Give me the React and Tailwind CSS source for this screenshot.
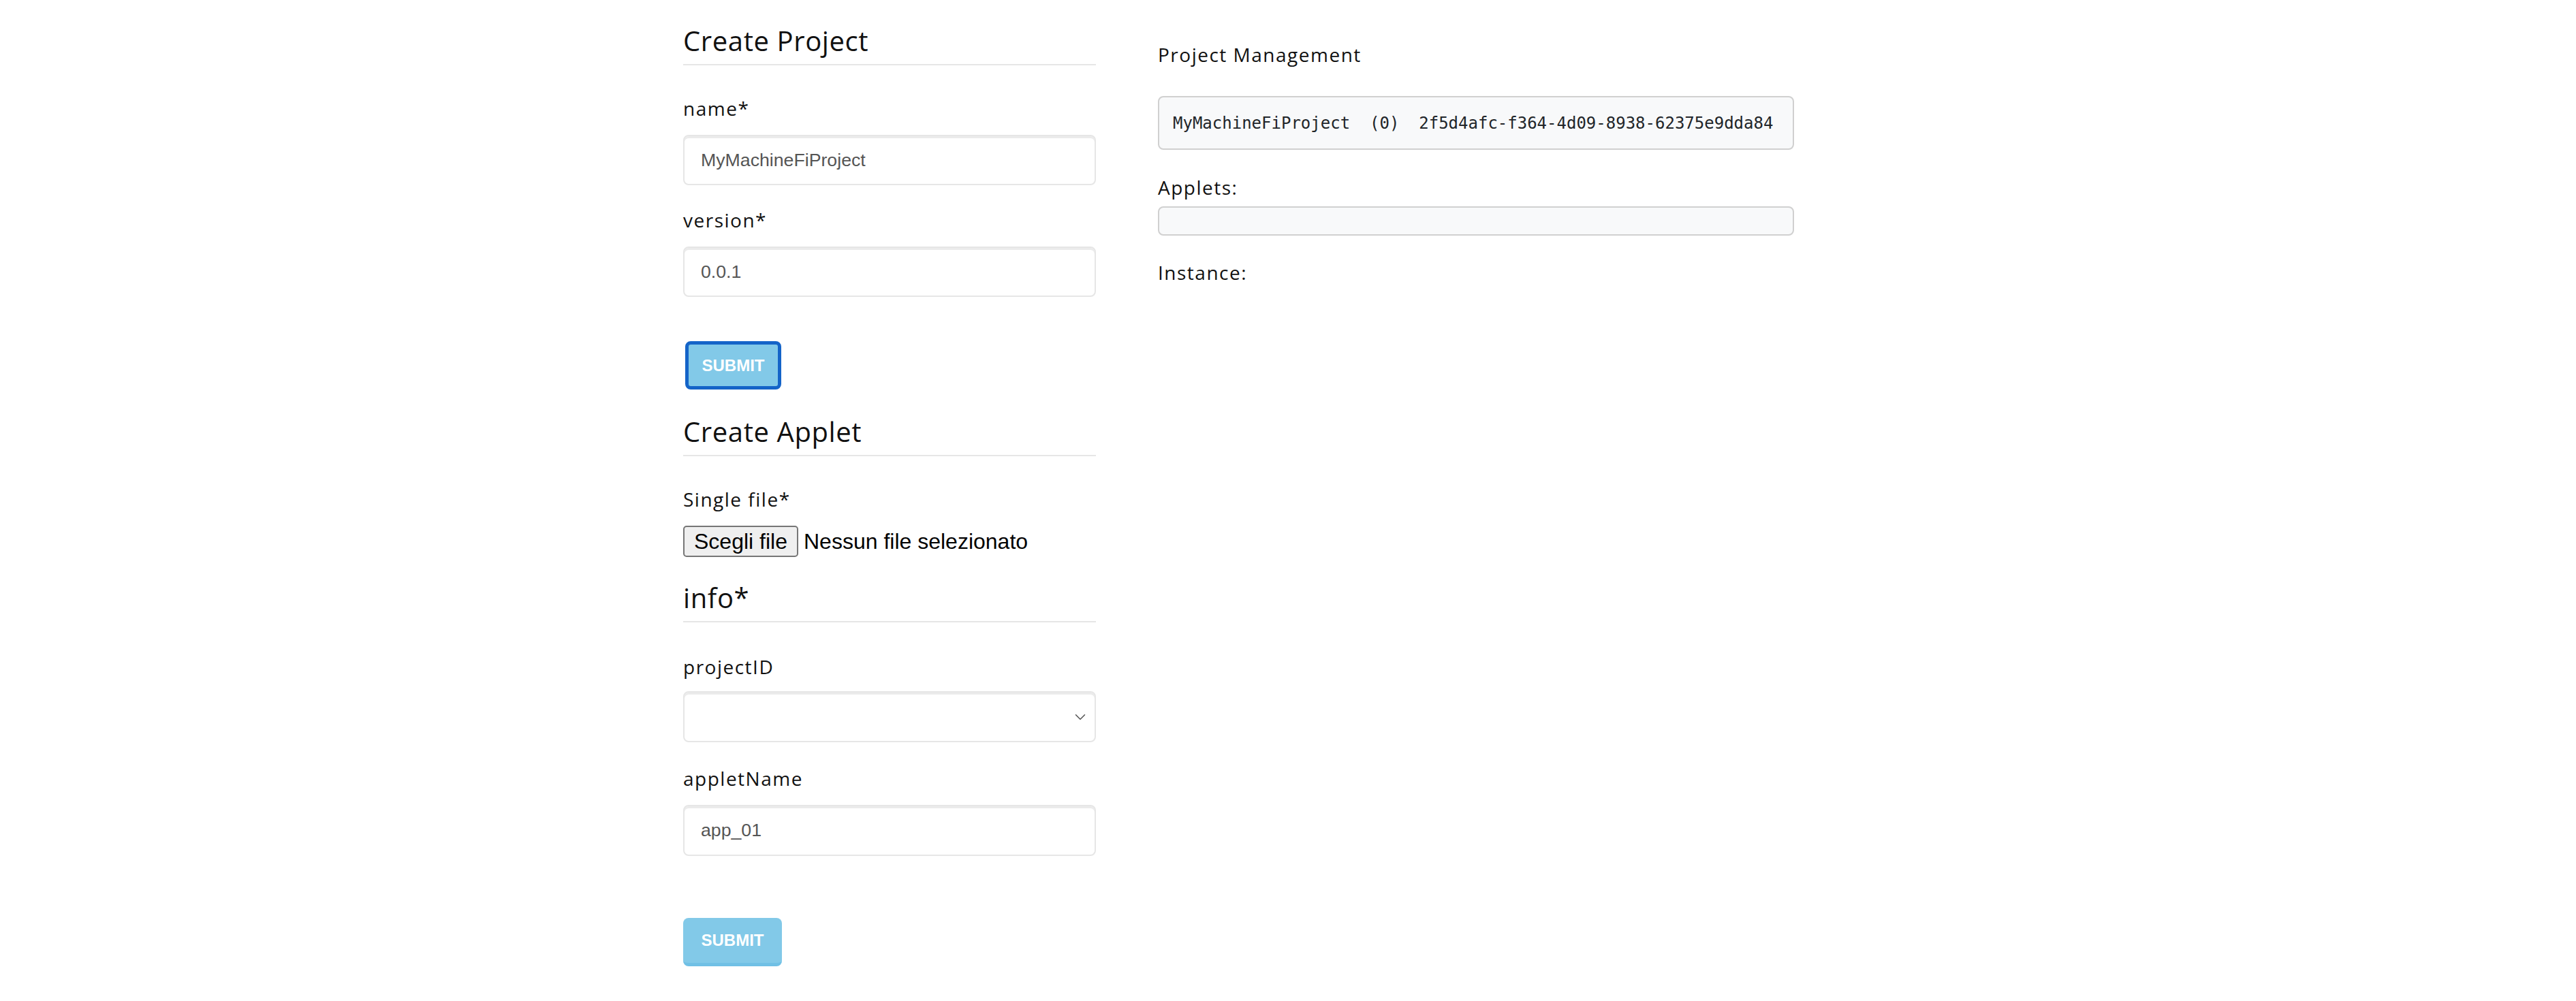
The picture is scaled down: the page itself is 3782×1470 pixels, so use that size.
import { ChevronDown } from "lucide-react";

const sans = "font-['Open_Sans',sans-serif]";

// section title with grey rule underneath
const Heading = ({ children, className = "" }) => (
  <h2
    className={`${sans} h-[60px] border-b-2 border-[#e6e6e6] text-[40px] leading-[48px] tracking-[0.6px] text-[#111] ${className}`}
  >
    {children}
  </h2>
);

const Label = ({ children, className = "" }) => (
  <div
    className={`${sans} h-[40px] text-[28px] leading-[40px] tracking-[1.5px] text-[#111] ${className}`}
  >
    {children}
  </div>
);

const TextInput = ({ value, className = "" }) => (
  <div
    className={`flex h-[74px] items-center rounded-[8px] border-2 border-[#e6e6e6] bg-white pl-[24px] font-['Liberation_Sans',Arial,sans-serif] text-[26.7px] text-[#555] shadow-[inset_0_3px_0_#ebebeb] ${className}`}
  >
    {value}
  </div>
);

const SubmitButton = ({ focused = false, className = "" }) => (
  <button
    className={`flex h-[71px] items-center justify-center rounded-[8px] bg-[#82c9e8] font-['Liberation_Sans',Arial,sans-serif] text-[24px] font-bold text-white ${
      focused
        ? "w-[141px] border-[5px] border-[#1464c8]"
        : "w-[145px] border-b-[5px] border-[#70c0e5]"
    } ${className}`}
  >
    SUBMIT
  </button>
);

export default function App() {
  return (
    <div className="min-h-[1470px] bg-white">
      <div className="flex pl-[1003px]">
        {/* left: forms */}
        <div className="flex w-[606px] flex-col">
          <Heading className="mt-[36px]">Create Project</Heading>
          <Label className="mt-[43px]">name*</Label>
          <TextInput className="mt-[19px]" value="MyMachineFiProject" />
          <Label className="mt-[31px]">version*</Label>
          <TextInput className="mt-[19px]" value="0.0.1" />
          <SubmitButton focused className="mt-[65px] ml-[3px]" />

          <Heading className="mt-[38px]">Create Applet</Heading>
          <Label className="mt-[43px]">Single file*</Label>
          <div className="mt-[19px] flex h-[46px] items-center gap-[8px] font-['Liberation_Sans',Arial,sans-serif] text-[32px] text-black">
            <span className="flex h-[46px] w-[169px] items-center justify-center rounded-[5px] border-2 border-[#767676] bg-[#efefef]">
              Scegli file
            </span>
            <span>Nessun file selezionato</span>
          </div>

          <Heading className="mt-[36px]">info*</Heading>
          <Label className="mt-[45px]">projectID</Label>
          <div className="mt-[16px] flex h-[75px] items-center justify-end rounded-[8px] border-2 border-[#e6e6e6] bg-white pr-[8px] shadow-[inset_0_3px_0_#ebebeb]">
            <ChevronDown size={26} strokeWidth={1.4} className="text-[#555]" />
          </div>
          <Label className="mt-[33px]">appletName</Label>
          <TextInput className="mt-[19px] h-[75px]" value="app_01" />
          <SubmitButton className="mt-[91px]" />
        </div>

        {/* right: project management */}
        <div className="ml-[91px] flex w-[934px] flex-col">
          <Label className="mt-[60px]">Project Management</Label>
          <div className="mt-[41px] flex h-[79px] items-center rounded-[8px] border-2 border-[#d0d0d0] bg-[#f8f9fa] pl-[20px] font-['DejaVu_Sans_Mono',monospace] text-[24px] whitespace-pre text-[#212529]">
            {"MyMachineFiProject  (0)  2f5d4afc-f364-4d09-8938-62375e9dda84"}
          </div>
          <Label className="mt-[35px]">Applets:</Label>
          <div className="mt-[8px] h-[43px] rounded-[8px] border-2 border-[#d0d0d0] bg-[#f8f9fa]" />
          <Label className="mt-[34px]">Instance:</Label>
        </div>
      </div>
    </div>
  );
}
